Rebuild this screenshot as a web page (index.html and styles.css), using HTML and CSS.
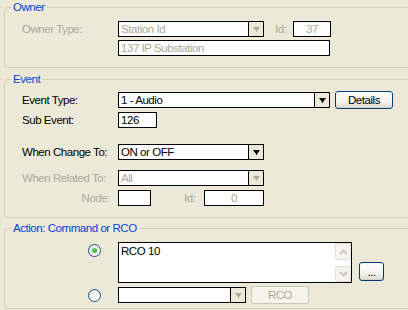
FILE: index.html
```html
<!DOCTYPE html>
<html lang="en">
<head>
    <meta charset="UTF-8">
    <meta name="viewport" content="width=device-width, initial-scale=1.0">
    <title>Event Action</title>
    <link rel="stylesheet" href="styles.css">
</head>
<body>
    <fieldset class="group owner">
        <legend>Owner</legend>
        <div class="rows">
            <div class="row">
                <span class="label disabled">Owner Type:</span>
                <div class="combo disabled w146">
                    <span class="value">Station Id</span>
                    <span class="drop"><svg width="7" height="5" viewBox="0 0 7 5"><polygon points="0,0 7,0 4,4 4,5 3,5 3,4"/></svg></span>
                </div>
                <span class="id-label disabled">Id:</span>
                <div class="field disabled center w38">37</div>
            </div>
            <div class="row next">
                <span class="label"></span>
                <div class="field disabled w212">137 IP Substation</div>
            </div>
        </div>
    </fieldset>

    <fieldset class="group event">
        <legend>Event</legend>
        <div class="rows">
            <div class="row">
                <span class="label">Event Type:</span>
                <div class="combo w212">
                    <span class="value">1 - Audio</span>
                    <span class="drop"><svg width="7" height="5" viewBox="0 0 7 5"><polygon points="0,0 7,0 4,4 4,5 3,5 3,4"/></svg></span>
                </div>
                <button type="button" class="btn details">Details</button>
            </div>
            <div class="row sub">
                <span class="label">Sub Event:</span>
                <div class="field w39">126</div>
            </div>
            <div class="row change">
                <span class="label">When Change To:</span>
                <div class="combo w146">
                    <span class="value">ON or OFF</span>
                    <span class="drop"><svg width="7" height="5" viewBox="0 0 7 5"><polygon points="0,0 7,0 4,4 4,5 3,5 3,4"/></svg></span>
                </div>
            </div>
            <div class="row related">
                <span class="label disabled">When Related To:</span>
                <div class="combo disabled w146">
                    <span class="value">All</span>
                    <span class="drop"><svg width="7" height="5" viewBox="0 0 7 5"><polygon points="0,0 7,0 4,4 4,5 3,5 3,4"/></svg></span>
                </div>
            </div>
            <div class="row sub">
                <span class="label right disabled">Node:</span>
                <div class="field w33"></div>
                <span class="node-id disabled">Id:</span>
                <div class="field disabled center w60">0</div>
            </div>
        </div>
    </fieldset>

    <fieldset class="group action">
        <legend>Action: Command or RCO</legend>
        <div class="rows">
            <div class="row command">
                <span class="radio on"></span>
                <div class="memo">
                    <div class="memo-text">RCO 10</div>
                    <div class="scrollbar">
                        <span class="scroll-btn"><svg width="9" height="6" viewBox="0 0 9 6"><polyline points="1,5 4.5,1.5 8,5"/></svg></span>
                        <span class="scroll-btn"><svg width="9" height="6" viewBox="0 0 9 6"><polyline points="1,1 4.5,4.5 8,1"/></svg></span>
                    </div>
                </div>
                <button type="button" class="btn more">...</button>
            </div>
            <div class="row rco">
                <span class="radio"></span>
                <div class="combo w128">
                    <span class="value"></span>
                    <span class="drop disabled"><svg width="7" height="5" viewBox="0 0 7 5"><polygon points="0,0 7,0 4,4 4,5 3,5 3,4"/></svg></span>
                </div>
                <button type="button" class="btn off" disabled>RCO</button>
            </div>
        </div>
    </fieldset>
</body>
</html>
```

FILE: styles.css
```css
body {
    margin: 0;
    width: 408px;
    height: 310px;
    overflow: hidden;
    background-color: #ECE9D8;
    font-family: "Liberation Sans", Arial, sans-serif;
    font-size: 11.5px;
    letter-spacing: -0.45px;
    color: #000;
}
.group {
    margin: 5px -20px 0 4px;
    padding: 6px 0 11px 0;
    border: 1px solid #D0D0BF;
    border-radius: 4px;
    min-width: 0;
}
.group legend {
    margin-left: 6px;
    padding: 0 2px;
    height: 13px;
    line-height: 13px;
    color: #0046D5; /* bleu XP */
}
.owner {
    margin-top: 1px;
    padding-top: 7px;
}
.action {
    margin-top: 4px;
    padding-top: 7px;
    padding-bottom: 4px;
}
.rows {
    padding-left: 17px;
}
.action .rows {
    padding-left: 83px;
}
.row {
    display: flex;
    align-items: center;
    height: 16px;
}
.row.next {
    margin-top: 3px;
}
.row.sub {
    margin-top: 4px;
}
.row.change {
    margin-top: 16px;
}
.row.related {
    margin-top: 10px;
}
.label {
    flex: none;
    width: 96px;
    line-height: 14px;
    white-space: nowrap;
}
.label.right {
    text-align: right;
    padding-right: 8px;
    box-sizing: border-box;
}
.disabled {
    color: #ACA899;
}
.id-label {
    width: 18px;
    margin-left: 11px;
}
.node-id {
    width: 20px;
    margin-left: 33px;
}
.field, .combo {
    flex: none;
    height: 16px;
    box-sizing: border-box;
    border: 1px solid #000;
    background-color: #fff;
    line-height: 14px;
    white-space: nowrap;
    overflow: hidden;
}
.field {
    padding: 0 2px;
}
.field.center {
    text-align: center;
}
.combo {
    display: flex;
}
.combo .value {
    flex: 1;
    padding-left: 2px;
}
.combo .drop {
    flex: none;
    width: 15px;
    box-sizing: border-box;
    border-left: 1px solid #000;
    background-color: #ECE9D8;
    display: flex;
    align-items: center;
    justify-content: center;
}
.drop svg {
    fill: #000;
}
.combo.disabled .drop svg, .drop.disabled svg {
    fill: #ACA899;
}
.w33 { width: 33px; }
.w38 { width: 38px; }
.w39 { width: 39px; }
.w60 { width: 60px; }
.w128 { width: 128px; }
.w146 { width: 146px; }
.w212 { width: 212px; }
.btn {
    flex: none;
    height: 18px;
    padding: 0;
    border: 1px solid #003C74;
    border-radius: 3px;
    background: linear-gradient(#FFFFFF, #F4F3EE 60%, #E3E0D6 90%, #D6D0C5);
    font-family: inherit;
    font-size: 11.5px;
    letter-spacing: -0.45px;
    color: #000;
}
.details {
    width: 58px;
    margin-left: 5px;
}
.more {
    width: 25px;
    height: 19px;
    margin: 20px 0 0 7px;
    line-height: 12px;
}
.btn.off {
    width: 58px;
    margin-left: 5px;
    border-color: #C9C7BA;
    background: #F5F4EA;
    color: #ACA899;
}
.radio {
    flex: none;
    width: 13px;
    height: 13px;
    box-sizing: border-box;
    border: 1px solid #1C5180;
    border-radius: 50%;
    background: linear-gradient(135deg, #DCDBD5, #FFFFFF 80%);
    margin-right: 17px;
}
.radio.on::after {
    content: '';
    display: block;
    width: 5px;
    height: 5px;
    margin: 3px;
    border-radius: 50%;
    background: radial-gradient(circle at 35% 35%, #63D563, #21A121);
}
.row.command {
    align-items: flex-start;
    height: 41px;
}
.command .radio {
    margin-top: 2px;
}
.memo {
    flex: none;
    display: flex;
    width: 234px;
    height: 41px;
    box-sizing: border-box;
    border: 1px solid #000;
    background-color: #fff;
}
.memo-text {
    flex: 1;
    padding: 1px 2px;
    line-height: 14px;
}
.scrollbar {
    width: 16px;
    display: flex;
    flex-direction: column;
    justify-content: space-between;
}
.scroll-btn {
    height: 16px;
    box-sizing: border-box;
    border: 1px solid #E3E1D6;
    border-radius: 2px;
    background-color: #F5F4EF;
    display: flex;
    align-items: center;
    justify-content: center;
}
.scroll-btn:first-child {
    height: 17px;
}
.scroll-btn svg {
    fill: none;
    stroke: #C8C6BB;
    stroke-width: 2;
}
.row.rco {
    height: 18px;
    margin-top: 3px;
}
```
